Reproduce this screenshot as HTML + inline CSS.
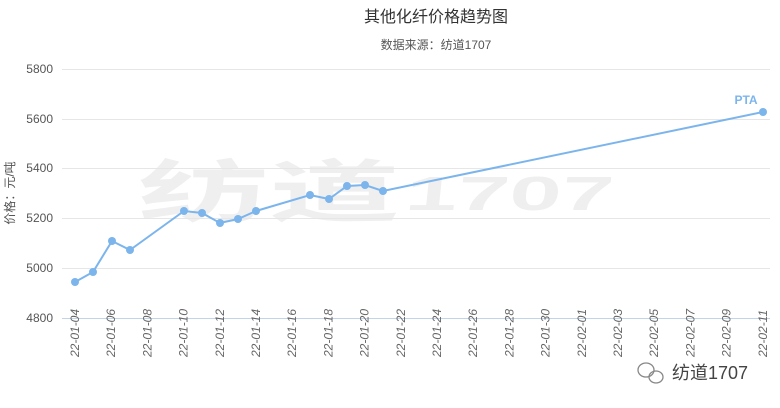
<!DOCTYPE html><html><head><meta charset="utf-8"><style>body{margin:0;background:#fff;width:780px;height:408px;overflow:hidden;font-family:"Liberation Sans","Noto Sans CJK SC",sans-serif}</style></head><body>
<svg width="780" height="408" xmlns="http://www.w3.org/2000/svg" style="position:absolute;left:0;top:0;font-family:'Liberation Sans','Noto Sans CJK SC',sans-serif">
<text x="138" y="216" font-size="68" fill="#efefef" font-weight="bold" textLength="262" lengthAdjust="spacingAndGlyphs">纺道</text>
<text x="405" y="210" font-size="48" fill="#efefef" font-weight="bold" textLength="208" lengthAdjust="spacingAndGlyphs" transform="skewX(-6)" style="transform-origin:500px 200px">1707</text>
<text x="436" y="22" font-size="16" fill="#333" text-anchor="middle">其他化纤价格趋势图</text>
<text x="436" y="49" font-size="12" fill="#555" text-anchor="middle">数据来源：纺道1707</text>
<g stroke="#e6e6e6" stroke-width="1">
<line x1="62" x2="770" y1="69.5" y2="69.5"/><line x1="62" x2="770" y1="119.5" y2="119.5"/><line x1="62" x2="770" y1="168.5" y2="168.5"/><line x1="62" x2="770" y1="218.5" y2="218.5"/><line x1="62" x2="770" y1="268.5" y2="268.5"/></g>
<line x1="62" x2="770" y1="318.5" y2="318.5" stroke="#c2d3ec"/>
<g font-size="12" fill="#555" text-anchor="end">
<text x="53" y="73">5800</text><text x="53" y="123">5600</text><text x="53" y="172">5400</text><text x="53" y="222">5200</text><text x="53" y="272">5000</text><text x="53" y="322">4800</text></g>
<text transform="translate(14,193) rotate(-90)" font-size="12" fill="#555" text-anchor="middle">价格：元/吨</text>
<g font-size="12" fill="#666" font-style="italic" id="lbl"></g>
<polyline fill="none" stroke="#7cb5ec" stroke-width="2" points="75,282 93,272 112,241 130,250 184,211 202,213 220,223 238,219 256,211 310,195 329,199 347,186 365,185 383,191 763,112"/>
<g fill="#7cb5ec"><circle cx="75" cy="282" r="4"/><circle cx="93" cy="272" r="4"/><circle cx="112" cy="241" r="4"/><circle cx="130" cy="250" r="4"/><circle cx="184" cy="211" r="4"/><circle cx="202" cy="213" r="4"/><circle cx="220" cy="223" r="4"/><circle cx="238" cy="219" r="4"/><circle cx="256" cy="211" r="4"/><circle cx="310" cy="195" r="4"/><circle cx="329" cy="199" r="4"/><circle cx="347" cy="186" r="4"/><circle cx="365" cy="185" r="4"/><circle cx="383" cy="191" r="4"/><circle cx="763" cy="112" r="4"/></g>
<text x="746" y="104" font-size="12" font-weight="bold" fill="#7cb5ec" text-anchor="middle">PTA</text>
<g fill="none" stroke="#888" stroke-width="1.3"><ellipse cx="646" cy="370" rx="8" ry="7"/><ellipse cx="656" cy="377" rx="7" ry="6"/></g>
<text x="672" y="379" font-size="18" fill="#444">纺道1707</text>
</svg>
<script>
var d=["22-01-04","22-01-06","22-01-08","22-01-10","22-01-12","22-01-14","22-01-16","22-01-18","22-01-20","22-01-22","22-01-24","22-01-26","22-01-28","22-01-30","22-02-01","22-02-03","22-02-05","22-02-07","22-02-09","22-02-11"];
var g=document.getElementById('lbl'),s='';
d.forEach(function(t,i){var x=75+i*36.2+4;s+='<text transform="translate('+x+',357) rotate(-90)" x="0" y="0">'+t+'</text>';});
g.innerHTML=s;
</script>
</body></html>
